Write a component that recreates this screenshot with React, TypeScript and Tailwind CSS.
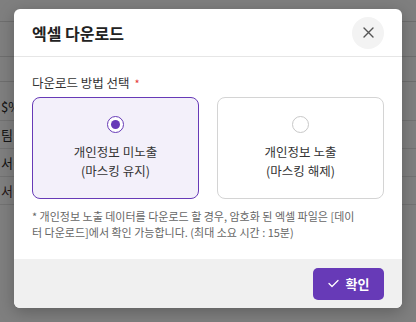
import { useState } from "react";

const font = { fontFamily: '"Noto Sans CJK KR", "Noto Sans", sans-serif' };

function BackgroundPage() {
  const rows = ["$%", "팀", "서(", "서("];
  return (
    <div className="flex flex-col bg-white text-[13px] text-[#2a2a2a]">
      <div className="h-[22px] border-b border-[#dcdcdc]" />
      <div className="h-[35px] border-b border-[#dcdcdc]" />
      <div className="h-[25px] border-b border-[#dcdcdc]" />
      <div className="h-[11px]" />
      {rows.map((r, i) => (
        <div
          key={i}
          className={`flex h-[28px] items-center border-b border-[#e4e4e4] pl-[1px] ${i === 3 ? "text-[#4a3030]" : ""}`}
        >
          {r}
        </div>
      ))}
    </div>
  );
}

function Radio({ checked }: { checked: boolean }) {
  return checked ? (
    <span className="flex h-[17px] w-[17px] items-center justify-center rounded-full border-[1.5px] border-[#673ab7] bg-white">
      <span className="h-[9px] w-[9px] rounded-full bg-[#673ab7]" />
    </span>
  ) : (
    <span className="h-[17px] w-[17px] rounded-full border border-[#c8c8c8] bg-white" />
  );
}

export default function App() {
  const [mode, setMode] = useState<"mask" | "open">("mask");

  const options = [
    { id: "mask" as const, l1: "개인정보 미노출", l2: "(마스킹 유지)" },
    { id: "open" as const, l1: "개인정보 노출", l2: "(마스킹 해제)" },
  ];

  return (
    <div className="relative h-[322px] w-[416px] overflow-hidden" style={font}>
      <BackgroundPage />
      <div className="absolute inset-0 bg-black/50" />

      <div className="absolute left-[14px] top-[9px] flex h-[299px] w-[388px] flex-col overflow-hidden rounded-[6px] bg-white shadow-[0_4px_16px_rgba(0,0,0,0.25)]">
        {/* Header */}
        <div className="flex h-[48px] shrink-0 items-center justify-between border-b border-[#e6e6e6] px-[18px]">
          <h2 className="text-[16px] font-bold text-[#222]">엑셀 다운로드</h2>
          <button className="flex h-[32px] w-[32px] items-center justify-center rounded-full bg-[#f3f3f3]">
            <svg width="11" height="11" viewBox="0 0 11 11" fill="none" stroke="#555" strokeWidth="1.4" strokeLinecap="round">
              <path d="M1 1l9 9M10 1l-9 9" />
            </svg>
          </button>
        </div>

        {/* Body */}
        <div className="flex flex-1 flex-col px-[18px] pt-[18px]">
          <div className="flex h-[16px] items-center text-[12.5px] leading-[16px] text-[#333]">
            다운로드 방법 선택
            <span className="ml-[5px] text-[11px] text-[#e53935]">*</span>
          </div>

          <div className="mt-[6px] grid grid-cols-2 gap-[18px]">
            {options.map((o) => {
              const on = mode === o.id;
              return (
                <button
                  key={o.id}
                  onClick={() => setMode(o.id)}
                  className={`flex h-[102px] flex-col items-center justify-center rounded-[8px] border ${
                    on ? "border-[#673ab7] bg-[#f3f0fa]" : "border-[#d4d4d4] bg-white"
                  }`}
                >
                  <Radio checked={on} />
                  <div className="mt-[9px] text-[12.5px] leading-[19px] text-[#333]">
                    <div>{o.l1}</div>
                    <div>{o.l2}</div>
                  </div>
                </button>
              );
            })}
          </div>

          <p className="mt-[9px] whitespace-nowrap text-[11px] leading-[16px] text-[#666]">
            * 개인정보 노출 데이터를 다운로드 할 경우, 암호화 된 엑셀 파일은 [데이
            <br />
            터 다운로드]에서 확인 가능합니다. (최대 소요 시간 : 15분)
          </p>
        </div>

        {/* Footer */}
        <div className="flex h-[49px] shrink-0 items-center justify-end bg-[#f0f0f0] px-[18px]">
          <button className="flex h-[32px] w-[71px] items-center justify-center gap-[7px] rounded-[5px] bg-[#673ab7] text-[13px] font-bold text-white">
            <svg width="11" height="9" viewBox="0 0 11 9" fill="none" stroke="white" strokeWidth="1.3" strokeLinecap="round" strokeLinejoin="round">
              <path d="M1 4.5l3 3L10 1.5" />
            </svg>
            확인
          </button>
        </div>
      </div>
    </div>
  );
}
